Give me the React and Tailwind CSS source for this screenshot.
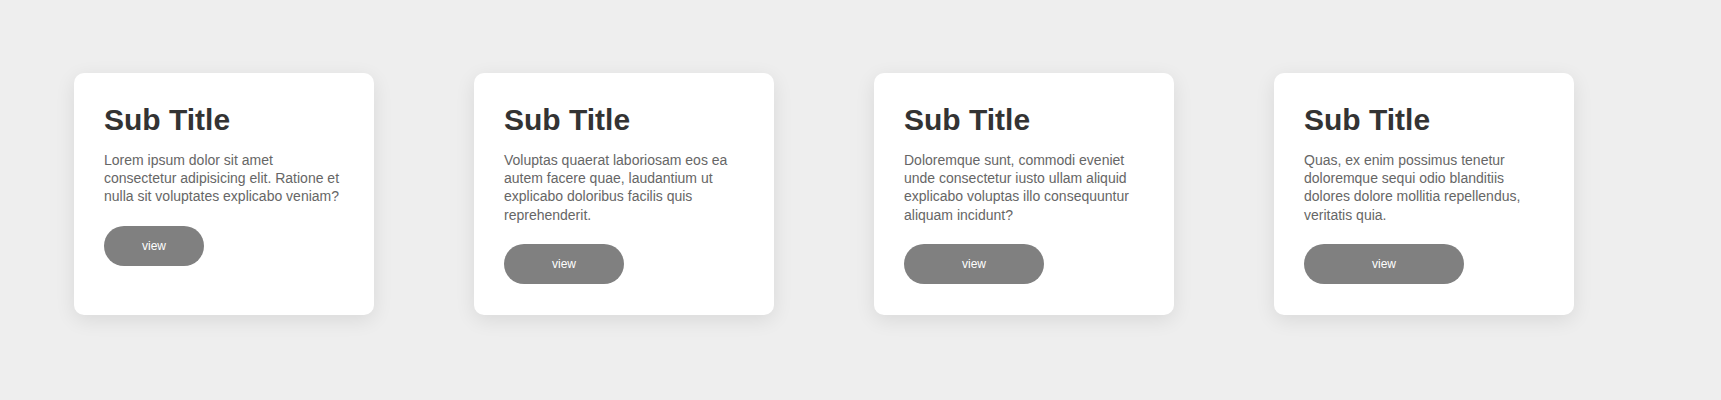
import React from "react";

const cards = [
  {
    text: "Lorem ipsum dolor sit amet consectetur adipisicing elit. Ratione et nulla sit voluptates explicabo veniam?",
    btn: "w-[100px]",
  },
  {
    text: "Voluptas quaerat laboriosam eos ea autem facere quae, laudantium ut explicabo doloribus facilis quis reprehenderit.",
    btn: "w-[120px]",
  },
  {
    text: "Doloremque sunt, commodi eveniet unde consectetur iusto ullam aliquid explicabo voluptas illo consequuntur aliquam incidunt?",
    btn: "w-[140px]",
  },
  {
    text: "Quas, ex enim possimus tenetur doloremque sequi odio blanditiis dolores dolore mollitia repellendus, veritatis quia.",
    btn: "w-[160px]",
  },
];

export default function App() {
  return (
    <div
      className="w-full h-[400px] overflow-hidden bg-[#eeeeee] flex items-start pl-[74px] pt-[73px] gap-[100px]"
      style={{ fontFamily: '"Liberation Sans", Arial, sans-serif' }}
    >
      {cards.map((c, i) => (
        <div
          key={i}
          className="w-[300px] bg-white rounded-[10px] p-[30px] shadow-[0_5px_20px_rgba(0,0,0,0.09)] self-stretch mb-[85px]"
        >
          <h2 className="text-[30px] font-bold text-[#333333] leading-[34px] m-0">Sub Title</h2>
          <p className="mt-[14px] text-[14px] leading-[18.2px] text-[#666666]">{c.text}</p>
          <button
            className={`${c.btn} mt-[20px] h-[40px] rounded-[20px] bg-[#808080] text-white text-[12px] flex items-center justify-center`}
          >
            view
          </button>
        </div>
      ))}
    </div>
  );
}
